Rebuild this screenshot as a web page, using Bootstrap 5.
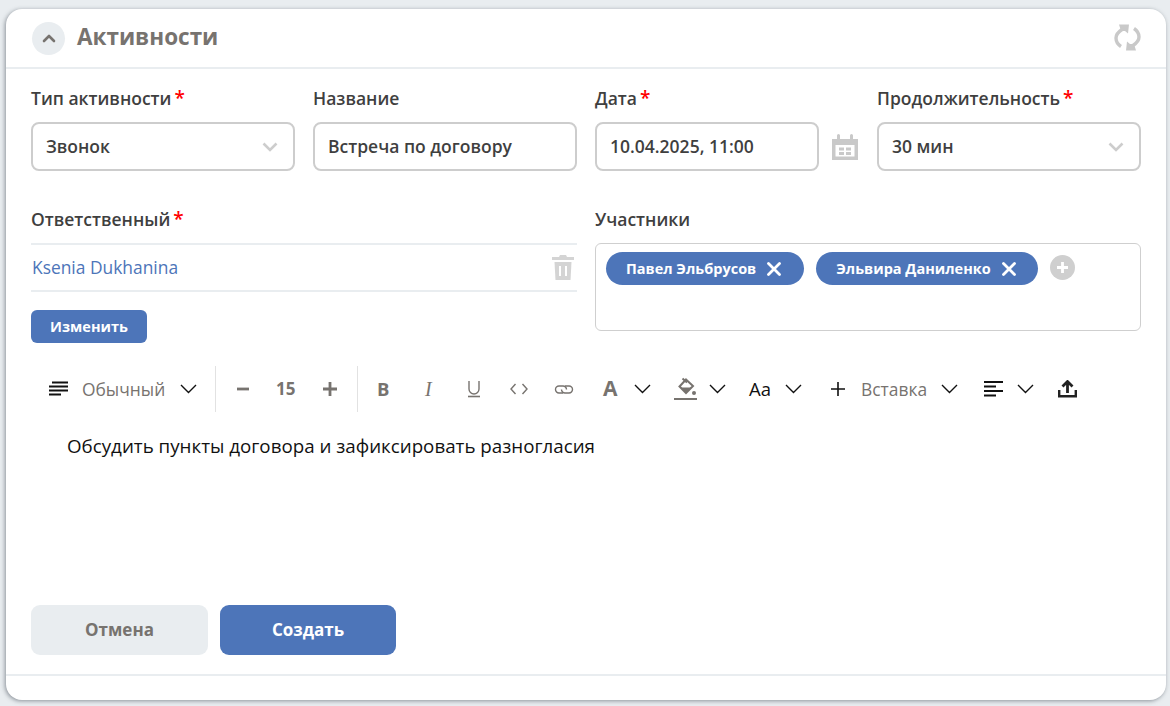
<!DOCTYPE html>
<html lang="ru">
<head>
<meta charset="utf-8">
<title>Активности</title>
<link href="https://cdn.jsdelivr.net/npm/bootstrap@5.3.0/dist/css/bootstrap.min.css" rel="stylesheet">
<style>
html,body{height:100%;}
body{background:#e9edf0;font-family:"Open Sans","Liberation Sans",sans-serif;color:#3f3f3f;overflow:hidden;}
.shell{margin:9px 4px 0 6px;height:691px;background:#fff;border-radius:16px;box-shadow:-1px 1px 4px rgba(60,70,80,.55);display:flex;flex-direction:column;}
.shell-head{height:60px;flex:none;border-bottom:2px solid #e9edf0;display:flex;align-items:center;padding:0 25px 0 26px;}
.collapse-btn{width:33px;height:33px;border-radius:50%;background:#e9edf0;display:flex;align-items:center;justify-content:center;margin-right:12px;}
.shell-title{font-size:22.500px;font-weight:700;color:#77736f;line-height:1;margin:0 0 1px;}
.refresh-ico{margin-bottom:2px;}
.form-area{padding:18px 25px 0;flex:1;display:flex;flex-direction:column;}
.fgrid{display:grid;grid-template-columns:repeat(4,264px);column-gap:18px;}
.flabel{font-size:17.500px;font-weight:600;line-height:22px;margin:0 0 13px;color:#3f3f3f;display:flex;}
.flabel b{color:#f00;font-weight:600;font-size:19px;margin-left:3px;}
.fbox{height:49px;border:2px solid #cdcdcd;border-radius:8px;font-size:17.500px;font-weight:600;padding:0 13px;display:flex;align-items:center;justify-content:space-between;color:#3f3f3f;background:#fff;}
.fbox svg{margin-right:2px;}
.date-wrap{display:flex;align-items:center;gap:13px;}
.date-wrap .fbox{width:224px;flex:none;}
.row2{display:grid;grid-template-columns:546px 546px;column-gap:18px;margin-top:37px;}
.row2 .flabel{margin-bottom:13px;}
.person{height:49px;border-top:2px solid #e9edf0;border-bottom:2px solid #e9edf0;display:flex;align-items:center;justify-content:space-between;padding:0 3px 0 1px;font-size:17.400px;color:#4d75b9;}
.change-btn{background:#4d75b9;border:0;color:#fff;font-size:14.500px;font-weight:700;border-radius:6px;height:33px;width:116px;margin-top:18px;padding:0;}
.people{height:88px;border:1px solid #cfcfcf;border-radius:6px;padding:8px 10px;display:flex;align-items:flex-start;gap:12px;}
.chip{height:33px;border-radius:17px;background:#4d75b9;color:#fff;font-size:14.500px;font-weight:700;display:flex;align-items:center;gap:11px;padding:0 22px 0 20px;}
.chip:first-child{padding-right:23px;}
.chip-add{width:25px;height:25px;border-radius:50%;background:#cfcfcf;display:flex;align-items:center;justify-content:center;margin-top:3px;}
.toolbar{display:flex;align-items:center;height:46px;margin-top:23px;font-size:17.400px;color:#77736f;position:relative;}
.tb{position:absolute;top:0;height:46px;display:flex;align-items:center;}
.tb-sep{width:1px;height:46px;background:#e2e2e2;}
.size{font-size:17px;font-weight:700;}
.editor{margin:21px 0 0 36px;font-size:18.750px;line-height:26px;color:#111;flex:1;}
.actions{display:flex;gap:12px;margin-bottom:19px;}
.act{height:50px;border:0;border-radius:9px;font-size:17px;font-weight:700;padding:0;}
.act-cancel{width:177px;background:#e9edf0;color:#77736f;}
.act-save{width:176px;background:#4d75b9;color:#fff;}
.shell-foot{height:26px;flex:none;border-top:2px solid #e9edf0;}
</style>
</head>
<body>
<div class="shell">
  <div class="shell-head">
    <div class="collapse-btn"><svg width="14" height="9" viewBox="0 0 14 9"><path d="M2 7 7 2l5 5" fill="none" stroke="#77736f" stroke-width="2.600" stroke-linecap="round" stroke-linejoin="round"/></svg></div>
    <h1 class="shell-title">Активности</h1>
    <svg class="ms-auto refresh-ico" width="27" height="27" viewBox="0 0 27 27"><path d="M8 5.500C3.500 8.500 2 11.500 2 14c0 3.500 2 6.500 5 8.500" fill="none" stroke="#c9c9c9" stroke-width="3.400"/><path d="M5 .5h10l-1 9-3-2.500-4 0z" fill="#c9c9c9"/><path d="M19 21.500c4.500-3 6-6 6-8.500 0-3.500-2-6.500-5-8.500" fill="none" stroke="#c9c9c9" stroke-width="3.400"/><path d="M22 26.500H12l1-9 3 2.500 4 0z" fill="#c9c9c9"/></svg>
  </div>
  <div class="form-area">
    <div class="fgrid">
      <div>
        <label class="flabel">Тип активности<b>*</b></label>
        <div class="fbox">Звонок <svg width="16" height="10" viewBox="0 0 16 10"><path d="M1.500 1.500 8 8l6.500-6.500" fill="none" stroke="#cdcdcd" stroke-width="2.600"/></svg></div>
      </div>
      <div>
        <label class="flabel">Название</label>
        <div class="fbox">Встреча по договору</div>
      </div>
      <div>
        <label class="flabel">Дата<b>*</b></label>
        <div class="date-wrap">
          <div class="fbox">10.04.2025, 11:00</div>
          <svg width="26" height="26" viewBox="0 0 26 26"><path d="M0 5h5V1.500a1.500 1.500 0 0 1 3 0V5h10V1.500a1.500 1.500 0 0 1 3 0V5h5v21H0z" fill="#c9c9c9"/><path d="M3.500 11h19v11.500h-19z" fill="#fff"/><path d="M7 13.500h5v3H7zM14 13.500h5v3h-5zM7 18h5v3H7zM14 18h5v3h-5z" fill="#c9c9c9"/></svg>
        </div>
      </div>
      <div>
        <label class="flabel">Продолжительность<b>*</b></label>
        <div class="fbox">30 мин <svg width="16" height="10" viewBox="0 0 16 10"><path d="M1.500 1.500 8 8l6.500-6.500" fill="none" stroke="#cdcdcd" stroke-width="2.600"/></svg></div>
      </div>
    </div>
    <div class="row2">
      <div>
        <label class="flabel">Ответственный<b>*</b></label>
        <div class="person">Ksenia Dukhanina <svg width="22" height="25" viewBox="0 0 22 25"><path d="M8 0h6l1 2h7v3H0V2h7z" fill="#d4d4d4"/><path d="M2.500 7h17l-1 18h-15z" fill="#d4d4d4"/><path d="M7 11h2v10H7zM13 11h2v10h-2z" fill="#fff"/></svg></div>
        <button class="change-btn" type="button">Изменить</button>
      </div>
      <div>
        <label class="flabel">Участники</label>
        <div class="people">
          <div class="chip">Павел Эльбрусов <svg width="14" height="14" viewBox="0 0 14 14"><path d="M1.500 1.500l11 11M12.500 1.500l-11 11" stroke="#fff" stroke-width="2.800" stroke-linecap="round"/></svg></div>
          <div class="chip">Эльвира Даниленко <svg width="14" height="14" viewBox="0 0 14 14"><path d="M1.500 1.500l11 11M12.500 1.500l-11 11" stroke="#fff" stroke-width="2.800" stroke-linecap="round"/></svg></div>
          <div class="chip-add"><svg width="13" height="13" viewBox="0 0 13 13"><path d="M6.500 1v11M1 6.500h11" stroke="#fff" stroke-width="2.800"/></svg></div>
        </div>
      </div>
    </div>
    <div class="toolbar">
      <span class="tb" style="left:18px"><svg width="20" height="16" viewBox="0 0 20 16"><path d="M3 1.500h16M0 5.500h19M0 9.500h19M0 13.500h12" stroke="#111" stroke-width="1.800"/></svg></span>
      <span class="tb" style="left:51px">Обычный</span>
      <span class="tb" style="left:149px"><svg width="17" height="10" viewBox="0 0 17 10"><path d="M1 1l7.500 7.500L16 1" fill="none" stroke="#111" stroke-width="1.400"/></svg></span>
      <span class="tb tb-sep" style="left:184px"></span>
      <span class="tb" style="left:206px"><svg width="12" height="12" viewBox="0 0 12 12"><path d="M0 6h12" stroke="#77736f" stroke-width="2.800"/></svg></span>
      <span class="tb size" style="left:245px">15</span>
      <span class="tb" style="left:292px"><svg width="14" height="14" viewBox="0 0 14 14"><path d="M0 7h14M7 0v14" stroke="#77736f" stroke-width="2.800"/></svg></span>
      <span class="tb tb-sep" style="left:326px"></span>
      <span class="tb size" style="left:346px;font-size:18.500px">B</span>
      <span class="tb" style="left:394px;font-family:'Liberation Serif',serif;font-style:italic;font-size:20px">I</span>
      <span class="tb" style="left:436px"><svg width="14" height="18" viewBox="0 0 14 18"><path d="M2 1v8a5 5 0 0 0 10 0V1" fill="none" stroke="#77736f" stroke-width="1.400"/><path d="M1 16.500h12" stroke="#77736f" stroke-width="1.600"/></svg></span>
      <span class="tb" style="left:479px"><svg width="18" height="12" viewBox="0 0 18 12"><path d="M5.500 1 1 6l4.500 5M12.500 1 17 6l-4.500 5" fill="none" stroke="#77736f" stroke-width="1.400"/></svg></span>
      <span class="tb" style="left:523px"><svg width="20" height="11" viewBox="0 0 20 11"><path d="M12.500 5.500A3.500 3.500 0 0 0 9 2H5a3.500 3.500 0 0 0 0 7h4" fill="none" stroke="#77736f" stroke-width="1.400"/><path d="M7.500 5.500A3.500 3.500 0 0 0 11 9h4a3.500 3.500 0 0 0 0-7h-4" fill="none" stroke="#77736f" stroke-width="1.400"/></svg></span>
      <span class="tb" style="left:572px;font-size:21px;font-weight:700">A</span>
      <span class="tb" style="left:603px"><svg width="17" height="10" viewBox="0 0 17 10"><path d="M1 1l7.500 7.500L16 1" fill="none" stroke="#111" stroke-width="1.400"/></svg></span>
      <span class="tb" style="left:643px"><svg width="23" height="24" viewBox="0 0 23 24"><path d="M12 2.500 19 9l-7 7-6.500-6.500z" fill="none" stroke="#77736f" stroke-width="2"/><path d="M6.500 10.500h11L12 16z" fill="#77736f"/><path d="M8.500 1.500 13 5.500" stroke="#77736f" stroke-width="2"/><circle cx="20" cy="16" r="2" fill="#77736f"/><path d="M0 22h23" stroke="#77736f" stroke-width="2"/></svg></span>
      <span class="tb" style="left:678px"><svg width="17" height="10" viewBox="0 0 17 10"><path d="M1 1l7.500 7.500L16 1" fill="none" stroke="#111" stroke-width="1.400"/></svg></span>
      <span class="tb" style="left:718px;color:#111;font-size:18.500px">Aa</span>
      <span class="tb" style="left:754px"><svg width="17" height="10" viewBox="0 0 17 10"><path d="M1 1l7.500 7.500L16 1" fill="none" stroke="#111" stroke-width="1.400"/></svg></span>
      <span class="tb" style="left:800px"><svg width="14" height="14" viewBox="0 0 14 14"><path d="M0 7h14M7 0v14" stroke="#111" stroke-width="1.600"/></svg></span>
      <span class="tb" style="left:830px">Вставка</span>
      <span class="tb" style="left:910px"><svg width="17" height="10" viewBox="0 0 17 10"><path d="M1 1l7.500 7.500L16 1" fill="none" stroke="#111" stroke-width="1.400"/></svg></span>
      <span class="tb" style="left:953px"><svg width="20" height="16" viewBox="0 0 20 16"><path d="M0 1h19M0 5.500h12M0 10h19M0 14.500h12" stroke="#111" stroke-width="1.800"/></svg></span>
      <span class="tb" style="left:986px"><svg width="17" height="10" viewBox="0 0 17 10"><path d="M1 1l7.500 7.500L16 1" fill="none" stroke="#111" stroke-width="1.400"/></svg></span>
      <span class="tb" style="left:1027px"><svg width="19" height="18" viewBox="0 0 19 18"><path d="M9.500 13V3M4.500 6.500 9.500 1.500l5 5" fill="none" stroke="#222" stroke-width="2.800"/><path d="M1.200 10v6.300h16.600V10" fill="none" stroke="#222" stroke-width="2.400"/></svg></span>
    </div>
    <div class="editor">Обсудить пункты договора и зафиксировать разногласия</div>
    <div class="actions">
      <button class="act act-cancel" type="button">Отмена</button>
      <button class="act act-save" type="button">Создать</button>
    </div>
  </div>
  <div class="shell-foot"></div>
</div>
<script src="https://cdn.jsdelivr.net/npm/bootstrap@5.3.0/dist/js/bootstrap.bundle.min.js"></script>
</body>
</html>
